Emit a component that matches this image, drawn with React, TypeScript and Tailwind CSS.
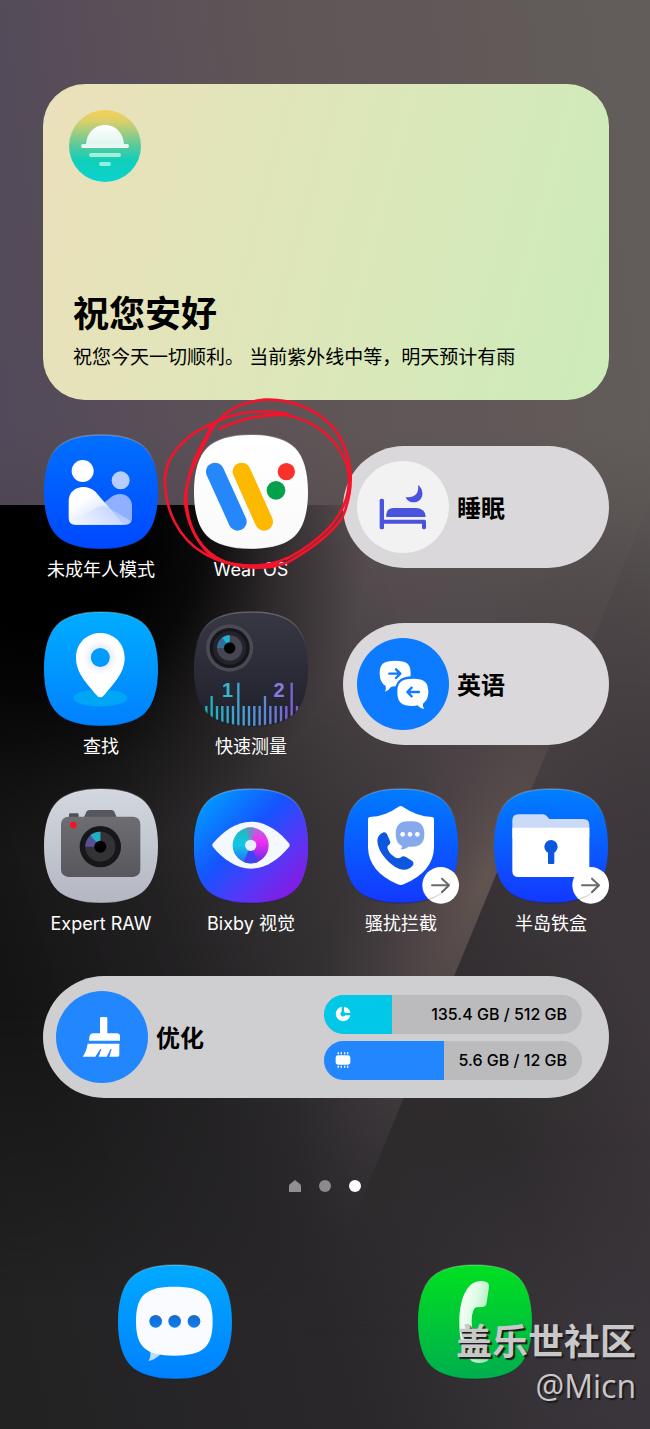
import type { ReactNode } from "react";

const SQUIRCLE =
  "M174 3C236 3 281 17 306 42S345 112 345 174S331 281 306 306S236 345 174 345S67 331 42 306S3 236 3 174S17 67 42 42S112 3 174 3Z";

type IconProps = { id: string; from: string; to: string; children: ReactNode };

// Shared rounded tile that every launcher icon is drawn on
function Tile({ id, from, to, children }: IconProps) {
  return (
    <svg viewBox="0 0 348 348" className="size-29 shrink-0" aria-hidden="true">
      <defs>
        <linearGradient id={`${id}-bg`} x1="0" y1="0" x2="0" y2="1">
          <stop offset="0" stopColor={from} />
          <stop offset="1" stopColor={to} />
        </linearGradient>
        <linearGradient id={`${id}-rim`} x1="0" y1="0" x2="0" y2="1">
          <stop offset="0" stopColor="#fff" stopOpacity="0.25" />
          <stop offset="0.3" stopColor="#fff" stopOpacity="0" />
          <stop offset="0.8" stopColor="#000" stopOpacity="0" />
          <stop offset="1" stopColor="#000" stopOpacity="0.2" />
        </linearGradient>
      </defs>
      <path d={SQUIRCLE} fill={`url(#${id}-bg)`} />
      {children}
      <path d={SQUIRCLE} fill="none" stroke={`url(#${id}-rim)`} strokeWidth="4" />
    </svg>
  );
}

function LinkBadge() {
  return (
    <g>
      <circle cx="293" cy="292" r="55" fill="#fff" />
      <path
        d="M267 292H317M297 272L318 292L297 312"
        fill="none"
        stroke="#6b6b70"
        strokeWidth="6"
        strokeLinecap="round"
        strokeLinejoin="round"
      />
    </g>
  );
}

function KidsIcon() {
  return (
    <Tile id="kids" from="#0070ff" to="#0048ff">
      <defs>
        <linearGradient id="kids-a" x1="0" y1="0" x2="1" y2="1">
          <stop offset="0.3" stopColor="#fff" />
          <stop offset="1" stopColor="#b9ccff" />
        </linearGradient>
        <linearGradient id="kids-b" x1="0" y1="1" x2="1" y2="0">
          <stop offset="0" stopColor="#fff" stopOpacity="0.9" />
          <stop offset="1" stopColor="#a9c3ff" stopOpacity="0.85" />
        </linearGradient>
      </defs>
      <circle cx="119" cy="111" r="33" fill="#fff" />
      <circle cx="233" cy="139" r="27" fill="#b7cdff" />
      <path d="M100 272L206 188C232 170 267 184 267 216V252Q267 272 247 272Z" fill="#8fb0ff" />
      <path d="M77 252V200C77 160 128 145 158 174L242 272H97Q77 272 77 252Z" fill="url(#kids-a)" />
      <path d="M82 266L160 222Q178 212 194 219L264 262Q260 272 247 272H97Q88 272 82 266Z" fill="url(#kids-b)" opacity="0.7" />
    </Tile>
  );
}

function WearIcon() {
  return (
    <Tile id="wear" from="#ffffff" to="#fafafa">
      <path d="M66 113L134 263" stroke="#2687fb" strokeWidth="54" strokeLinecap="round" />
      <path d="M146 113L213 263" stroke="#fcb900" strokeWidth="54" strokeLinecap="round" />
      <circle cx="280" cy="113" r="26" fill="#fb312c" />
      <circle cx="249" cy="169" r="28" fill="#04a14b" />
    </Tile>
  );
}

function FindIcon() {
  return (
    <Tile id="find" from="#00adff" to="#0080ff">
      <defs>
        <radialGradient id="find-pin" gradientUnits="userSpaceOnUse" cx="172" cy="139" r="80">
          <stop offset="0.35" stopColor="#e8edfc" />
          <stop offset="0.65" stopColor="#fff" />
        </radialGradient>
      </defs>
      <ellipse cx="172" cy="261" rx="81" ry="25" fill="#00a6f6" />
      <path
        fillRule="evenodd"
        d="M172 66C130 66 99 98 99 141C99 190 140 225 158 250Q172 268 186 250C204 225 245 190 245 141C245 98 214 66 172 66ZM172 111A28 28 0 1 1 172 168A28 28 0 1 1 172 111Z"
        fill="url(#find-pin)"
      />
    </Tile>
  );
}

const TICKS = Array.from({ length: 18 }, (_, i) => ({
  x: 40 + i * 16,
  y: i === 6 || i === 16 ? 215 : i === 1 || i === 11 ? 255 : 285,
}));

function MeasureIcon() {
  return (
    <Tile id="measure" from="#373843" to="#20202c">
      <defs>
        <clipPath id="measure-clip">
          <path d={SQUIRCLE} />
        </clipPath>
        <linearGradient id="measure-tick" gradientUnits="userSpaceOnUse" x1="30" y1="0" x2="320" y2="0">
          <stop offset="0" stopColor="#18b5b8" />
          <stop offset="0.45" stopColor="#4b9fd0" />
          <stop offset="1" stopColor="#8658d6" />
        </linearGradient>
      </defs>
      <circle cx="110" cy="111" r="71" fill="#4a4a55" />
      <circle cx="110" cy="111" r="60" fill="#15151b" />
      <circle cx="110" cy="111" r="50" fill="#23232b" />
      <circle cx="110" cy="111" r="38" fill="#454651" />
      <path d="M110 111V73A38 38 0 0 0 72 111Z" fill="#2f6f9a" />
      <path d="M110 111V73A38 38 0 0 0 88 80Z" fill="#1fb4cf" />
      <circle cx="110" cy="111" r="17" fill="#000" />
      <g clipPath="url(#measure-clip)" stroke="url(#measure-tick)" strokeWidth="7">
        {TICKS.map((t) => (
          <path key={t.x} d={`M${t.x} ${t.y}V348`} />
        ))}
      </g>
      <g className="font-['Liberation_Sans',sans-serif] font-bold" fontSize="60" textAnchor="middle">
        <text x="104" y="259" fill="#35b8cf">1</text>
        <text x="258" y="259" fill="#8b7be0">2</text>
      </g>
    </Tile>
  );
}

function CameraIcon() {
  return (
    <Tile id="camera" from="#d3d7df" to="#b4b7c1">
      <defs>
        <linearGradient id="camera-body" x1="0" y1="0" x2="0" y2="1">
          <stop offset="0" stopColor="#6d6d72" />
          <stop offset="1" stopColor="#57575d" />
        </linearGradient>
      </defs>
      <rect x="78" y="76" width="29" height="16" rx="4" fill="#4f5056" />
      <path d="M122 90L130 71Q133 66 140 66H205Q212 66 214 71L222 90Z" fill="#56575d" />
      <rect x="54" y="86" width="238" height="181" rx="22" fill="url(#camera-body)" />
      <circle cx="91" cy="111" r="10" fill="#f8121d" />
      <circle cx="172" cy="176" r="62" fill="#17171a" />
      <circle cx="172" cy="176" r="45" fill="#333236" />
      <path d="M172 176V131A45 45 0 0 0 127 176Z" fill="#575096" />
      <path d="M172 176V131A45 45 0 0 0 142 142Z" fill="#1fb1c4" />
      <circle cx="172" cy="176" r="18" fill="#000" />
    </Tile>
  );
}

function BixbyIcon() {
  return (
    <Tile id="bixby" from="#0090ff" to="#4a3cff">
      <defs>
        <linearGradient id="bixby-tile" x1="0.05" y1="0.1" x2="0.9" y2="0.95">
          <stop offset="0" stopColor="#009dff" />
          <stop offset="0.42" stopColor="#1554ff" />
          <stop offset="0.7" stopColor="#5538f8" />
          <stop offset="1" stopColor="#8c16e0" />
        </linearGradient>
        <linearGradient id="bixby-left" x1="0" y1="0" x2="0" y2="1">
          <stop offset="0" stopColor="#1fb7b4" />
          <stop offset="0.5" stopColor="#12c8e8" />
          <stop offset="1" stopColor="#2a66f0" />
        </linearGradient>
        <linearGradient id="bixby-right" x1="0" y1="0" x2="0" y2="1">
          <stop offset="0" stopColor="#b06be0" />
          <stop offset="0.4" stopColor="#f32df0" />
          <stop offset="1" stopColor="#5a2be8" />
        </linearGradient>
      </defs>
      <path d={SQUIRCLE} fill="url(#bixby-tile)" />
      <path
        d="M60 166C90 130 130 101 174 101S258 130 288 166Q292 171 288 177C258 213 218 242 174 242S90 213 60 177Q56 171 60 166Z"
        fill="#f6f8ff"
      />
      <path d="M173 118A54 54 0 0 0 173 226Z" fill="url(#bixby-left)" />
      <path d="M173 118A54 54 0 0 1 173 226Z" fill="url(#bixby-right)" />
      <path d="M173 172L152 222A54 54 0 0 0 196 221Z" fill="#3f43f5" />
      <path d="M173 172L160 120A54 54 0 0 1 186 120Z" fill="#7a86c4" />
      <circle cx="173" cy="172" r="17" fill="#e8f0ff" />
    </Tile>
  );
}

function BlockIcon() {
  return (
    <Tile id="block" from="#007cff" to="#1338ff">
      <path
        d="M173 54Q178 54 184 59Q220 84 268 87Q273 88 273 93V180Q270 252 182 289Q173 293 164 289Q78 252 75 180V93Q75 88 80 87Q128 84 162 59Q168 54 173 54Z"
        fill="#fff"
      />
      <path
        d="M194 100H208Q244 100 244 138T208 176H196Q188 184 172 184Q178 180 177 174Q158 166 158 138Q158 100 194 100Z"
        fill="#86a9ee"
      />
      <circle cx="179" cy="139" r="7" fill="#fff" />
      <circle cx="201" cy="139" r="7" fill="#fff" />
      <circle cx="223" cy="139" r="7" fill="#fff" />
      <path
        d="M103 158Q105 138 122 133Q129 132 133 140L142 162Q143 168 134 174Q131 180 140 194Q155 210 165 211Q172 211 176 206Q181 203 190 208L208 219Q213 223 211 230Q200 246 180 245Q155 242 128 212Q104 185 103 158Z"
        fill="#0e55e0"
      />
      <LinkBadge />
    </Tile>
  );
}

function SafeIcon() {
  return (
    <Tile id="safe" from="#0080ff" to="#1338ff">
      <path d="M58 97Q58 79 76 79H150Q157 79 161 84L169 93H271Q289 93 289 111V150H58Z" fill="#cbdaf7" />
      <path d="M58 119H289V249Q289 267 271 267H76Q58 267 58 249Z" fill="#fff" />
      <circle cx="174" cy="176" r="20" fill="#0b57dd" />
      <rect x="165" y="180" width="19" height="48" rx="3" fill="#0b57dd" />
      <LinkBadge />
    </Tile>
  );
}

function MessagesIcon() {
  return (
    <Tile id="messages" from="#00aaff" to="#0080ff">
      <defs>
        <linearGradient id="messages-dot" x1="0" y1="0" x2="0" y2="1">
          <stop offset="0" stopColor="#1a68c8" />
          <stop offset="1" stopColor="#0a80f5" />
        </linearGradient>
      </defs>
      <path d="M99 255Q103 280 94 291Q112 290 134 268Z" fill="#b8dcff" />
      <path
        d="M172 68C260 68 287 96 287 172C287 248 260 275 172 275C84 275 57 248 57 172C57 96 84 68 172 68Z"
        fill="#fafbff"
      />
      <circle cx="116" cy="172" r="19" fill="url(#messages-dot)" />
      <circle cx="173" cy="172" r="19" fill="url(#messages-dot)" />
      <circle cx="231" cy="172" r="19" fill="url(#messages-dot)" />
    </Tile>
  );
}

function PhoneIcon() {
  return (
    <Tile id="phone" from="#00e020" to="#00ae4e">
      <defs>
        <linearGradient id="phone-set" x1="0" y1="0" x2="1" y2="0.6">
          <stop offset="0" stopColor="#fff" />
          <stop offset="0.5" stopColor="#e0fbe6" />
          <stop offset="1" stopColor="#9fe8b4" />
        </linearGradient>
      </defs>
      <path
        d="M208 54Q217 57 216 70L208 121Q206 128 198 129L178 130Q165 133 164 172Q165 214 178 218L198 219Q206 221 208 228L216 278Q216 290 206 293Q188 300 170 294C140 278 127 232 127 174C127 112 146 62 178 53Q194 49 208 54Z"
        fill="url(#phone-set)"
      />
    </Tile>
  );
}

function Scribble() {
  return (
    <svg
      viewBox="390 0 585 531"
      className="pointer-events-none absolute -left-8 -top-[39px] h-[177px] w-[195px]"
      fill="none"
      stroke="#f3142c"
      strokeWidth="8"
      strokeLinecap="round"
      aria-hidden="true"
    >
      <path d="M772 57C700 44 620 48 552 82C460 120 405 180 402 250C400 340 440 430 520 476C590 515 690 534 770 502C840 462 900 420 935 365C975 270 965 170 905 95C850 40 775 10 700 14C620 22 560 60 530 125C500 190 462 250 462 320C470 400 510 470 580 500C650 520 720 512 765 490" />
      <path d="M565 102C620 76 690 56 765 60C850 76 920 130 948 210C968 290 935 370 860 430C830 455 800 475 765 492" />
      <path d="M545 86C520 140 475 200 466 290C462 360 485 430 540 482C600 516 680 522 740 506" />
    </svg>
  );
}

function SleepGlyph() {
  return (
    <svg viewBox="0 0 276 276" className="size-full" fill="#4a53dd" aria-hidden="true">
      <rect x="68" y="113" width="13" height="92" rx="5" />
      <path d="M88 168V160Q90 141 110 141H176Q206 142 206 168Z" />
      <path d="M74 176H202Q207 176 207 181V200Q207 205 201 205T195 200V188H74Z" />
      <path d="M183 72C205 88 199 124 170 124C158 124 148 117 146 108C168 112 188 100 183 72Z" />
    </svg>
  );
}

function TranslateGlyph() {
  return (
    <svg viewBox="0 0 276 276" className="size-full" aria-hidden="true">
      <path
        d="M114 68C150 68 161 78 161 106S150 145 114 145Q106 145 101 148Q95 158 84 161Q88 152 86 144Q68 134 68 106C68 78 80 68 114 68Z"
        fill="#fff"
      />
      <path
        d="M168 122C204 122 214 134 214 163Q214 186 198 197Q196 205 201 213Q188 210 181 202Q176 204 168 204C132 204 121 192 121 163S132 122 168 122Z"
        fill="#fff"
        stroke="#0c7bff"
        strokeWidth="14"
        paintOrder="stroke"
      />
      <path
        d="M97 107H129M117 94L130 107L117 120M186 162H152M164 149L151 162L164 175"
        fill="none"
        stroke="#0c7bff"
        strokeWidth="7"
        strokeLinecap="round"
        strokeLinejoin="round"
      />
    </svg>
  );
}

function BroomGlyph() {
  return (
    <svg viewBox="0 0 276 276" className="size-full" fill="#fff" aria-hidden="true">
      <path d="M132 82Q132 78 136 78H150Q154 78 154 82V127H182Q192 127 192 137V149H99Q99 127 111 127H132Z" />
      <path d="M95 158H190V192Q190 197 185 197H160L167 174H164L152 197H128L136 174H133L118 197H80Q92 180 95 158Z" />
    </svg>
  );
}

function SunGlyph() {
  return (
    <svg viewBox="0 0 72 72" className="size-18" aria-hidden="true">
      <defs>
        <linearGradient id="sun-bg" x1="0" y1="0" x2="0" y2="1">
          <stop offset="0" stopColor="#f6cf5a" />
          <stop offset="0.15" stopColor="#dcd069" />
          <stop offset="0.5" stopColor="#57c99c" />
          <stop offset="0.7" stopColor="#0fcfb9" />
          <stop offset="1" stopColor="#0ad3d0" />
        </linearGradient>
        <linearGradient id="sun-dome" x1="0" y1="0" x2="0" y2="1">
          <stop offset="0" stopColor="#fff" />
          <stop offset="1" stopColor="#dff4ec" />
        </linearGradient>
      </defs>
      <circle cx="36" cy="36" r="36" fill="url(#sun-bg)" />
      <path d="M17 36C17 8 55 8 55 36Z" fill="url(#sun-dome)" />
      <rect x="12" y="34" width="48" height="4" rx="2" fill="#e6f8f1" />
      <rect x="20" y="43" width="32" height="4" rx="2" fill="#a5eedd" />
      <rect x="30" y="52" width="12" height="4" rx="2" fill="#93efe2" />
    </svg>
  );
}

function Wallpaper() {
  return (
    <svg
      viewBox="0 0 650 1429"
      preserveAspectRatio="none"
      className="absolute inset-0 -z-10 size-full"
      aria-hidden="true"
    >
      <defs>
        <linearGradient id="wp-base" x1="0" y1="0.3" x2="1" y2="0">
          <stop offset="0" stopColor="#52495a" />
          <stop offset="0.45" stopColor="#5f5557" />
          <stop offset="1" stopColor="#625d5a" />
        </linearGradient>
        <linearGradient id="wp-shade" x1="0" y1="0" x2="0" y2="1">
          <stop offset="0" stopColor="#3c363a" stopOpacity="0" />
          <stop offset="0.4" stopColor="#3c363a" stopOpacity="0.85" />
          <stop offset="1" stopColor="#3a353c" />
        </linearGradient>
        <linearGradient id="wp-left" gradientUnits="userSpaceOnUse" x1="0" y1="960" x2="460" y2="820">
          <stop offset="0" stopColor="#151415" />
          <stop offset="0.35" stopColor="#212021" stopOpacity="0.95" />
          <stop offset="0.7" stopColor="#302e2f" stopOpacity="0.6" />
          <stop offset="1" stopColor="#3a3637" stopOpacity="0" />
        </linearGradient>
        <linearGradient id="wp-left-in" x1="0" y1="0" x2="0" y2="1">
          <stop offset="0" stopColor="#fff" stopOpacity="0" />
          <stop offset="0.25" stopColor="#fff" />
        </linearGradient>
        <mask id="wp-left-mask">
          <rect y="505" width="650" height="924" fill="url(#wp-left-in)" />
        </mask>
        <radialGradient id="wp-black" gradientUnits="userSpaceOnUse" cx="40" cy="530" r="330">
          <stop offset="0.3" stopColor="#000" />
          <stop offset="0.5" stopColor="#000" stopOpacity="0.85" />
          <stop offset="0.75" stopColor="#000" stopOpacity="0.35" />
          <stop offset="1" stopColor="#000" stopOpacity="0" />
        </radialGradient>
        <radialGradient id="wp-glow" gradientUnits="userSpaceOnUse" cx="0" cy="0" r="1" gradientTransform="translate(485 880) rotate(22) scale(130 390)">
          <stop offset="0" stopColor="#625550" />
          <stop offset="0.5" stopColor="#52474a" stopOpacity="0.55" />
          <stop offset="1" stopColor="#463f40" stopOpacity="0" />
        </radialGradient>
        <linearGradient id="wp-right" gradientUnits="userSpaceOnUse" x1="450" y1="1040" x2="620" y2="960">
          <stop offset="0" stopColor="#2d2a2c" />
          <stop offset="1" stopColor="#3d373b" />
        </linearGradient>
        <linearGradient id="wp-right-in" x1="0" y1="0" x2="0" y2="1">
          <stop offset="0" stopColor="#fff" stopOpacity="0" />
          <stop offset="0.2" stopColor="#fff" stopOpacity="0.35" />
          <stop offset="0.4" stopColor="#fff" stopOpacity="0.95" />
          <stop offset="0.7" stopColor="#fff" stopOpacity="0.9" />
          <stop offset="0.9" stopColor="#fff" stopOpacity="0" />
        </linearGradient>
        <mask id="wp-right-mask">
          <rect y="502" width="650" height="927" fill="url(#wp-right-in)" />
        </mask>
        <linearGradient id="wp-floor" gradientUnits="userSpaceOnUse" x1="0" y1="1300" x2="540" y2="1180">
          <stop offset="0" stopColor="#232223" />
          <stop offset="0.55" stopColor="#29272a" />
          <stop offset="1" stopColor="#3a353c" stopOpacity="0" />
        </linearGradient>
        <linearGradient id="wp-floor-in" x1="0" y1="0" x2="0" y2="1">
          <stop offset="0" stopColor="#fff" stopOpacity="0" />
          <stop offset="0.7" stopColor="#fff" />
        </linearGradient>
        <mask id="wp-floor-mask">
          <rect y="1000" width="650" height="429" fill="url(#wp-floor-in)" />
        </mask>
      </defs>
      <rect width="650" height="1429" fill="url(#wp-base)" />
      <rect y="430" width="650" height="999" fill="url(#wp-shade)" />
      <rect y="505" width="650" height="924" fill="url(#wp-left)" mask="url(#wp-left-mask)" />
      <rect y="505" width="650" height="924" fill="url(#wp-black)" />
      <rect y="505" width="650" height="924" fill="url(#wp-glow)" />
      <rect y="1000" width="650" height="429" fill="url(#wp-floor)" mask="url(#wp-floor-mask)" />
      <path d="M650 502L267 1429H650Z" fill="url(#wp-right)" mask="url(#wp-right-mask)" />
    </svg>
  );
}

type AppProps = { label: string; icon: ReactNode; children?: ReactNode };

function AppShortcut({ label, icon, children }: AppProps) {
  return (
    <button type="button" className="relative flex flex-col items-center gap-2">
      {icon}
      <span className="whitespace-nowrap text-lg leading-6 text-white">{label}</span>
      {children}
    </button>
  );
}

type PillProps = { label: string; color: string; glyph: ReactNode };

function PillWidget({ label, color, glyph }: PillProps) {
  return (
    <button
      type="button"
      className="col-span-2 mt-3 flex h-[122px] items-center gap-2 rounded-full bg-[#dad8da] pl-[14px]"
    >
      <span className={`size-23 shrink-0 rounded-full ${color}`}>{glyph}</span>
      <span className="pt-1 text-2xl font-bold text-black">{label}</span>
    </button>
  );
}

type MeterProps = {
  name: string;
  used: number;
  total: number;
  color: string;
  icon: ReactNode;
};

function Meter({ name, used, total, color, icon }: MeterProps) {
  return (
    <div
      role="meter"
      aria-label={name}
      aria-valuenow={used}
      aria-valuemin={0}
      aria-valuemax={total}
      className="relative flex h-[39px] items-center justify-end overflow-hidden rounded-full bg-[#bbbbbd] pr-[15px]"
    >
      <div
        className={`absolute inset-y-0 left-0 flex items-center pl-[11px] ${color}`}
        style={{ width: `${(used / total) * 100}%` }}
      >
        {icon}
      </div>
      <span className="font-['Inter',sans-serif] text-base font-medium text-black">
        {used} GB / {total} GB
      </span>
    </div>
  );
}

function StorageIcon() {
  return (
    <svg viewBox="0 0 48 48" className="size-4" aria-hidden="true">
      <path d="M20 2A22 22 0 1 0 46 28H31A8 8 0 1 1 20 17Z" fill="#fff" />
      <path d="M27 2A22 22 0 0 1 46 21H31A8 8 0 0 0 27 17Z" fill="#fff" />
    </svg>
  );
}

function MemoryIcon() {
  return (
    <svg viewBox="0 0 48 48" className="size-4" aria-hidden="true">
      <rect x="2" y="10" width="44" height="28" rx="7" fill="#fff" />
      <path d="M10 1V47M19 1V47M29 1V47M38 1V47" stroke="#fff" strokeWidth="4" strokeDasharray="6 34" />
    </svg>
  );
}

export default function App() {
  return (
    <div className="relative isolate flex min-h-screen flex-col overflow-hidden bg-[#2b292b] pb-[49px] pt-[84px] font-['Inter','Noto_Sans_CJK_SC',sans-serif]">
      <Wallpaper />

      <main className="flex flex-col pl-[43px] pr-[41px]">
        <section className="flex h-[316px] flex-col rounded-[42px] bg-linear-[105deg,#ebe0bb_0%,#dde7b9_50%,#cdebba_100%] px-[30px] pb-7 pt-[26px] text-black">
          <div className="-ml-1">
            <SunGlyph />
          </div>
          <h1 className="mt-auto text-4xl leading-[44px] font-bold">祝您安好</h1>
          <p className="mt-2 text-[19px] leading-7">
            祝您今天一切顺利。 当前紫外线中等，明天预计有雨
          </p>
        </section>

        <div className="mt-[34px] grid grid-cols-4 items-start gap-x-[34px] gap-y-[29px]">
          <AppShortcut label="未成年人模式" icon={<KidsIcon />} />
          <AppShortcut label="Wear OS" icon={<WearIcon />}>
            <Scribble />
          </AppShortcut>
          <PillWidget label="睡眠" color="bg-[#f3f2f3]" glyph={<SleepGlyph />} />

          <AppShortcut label="查找" icon={<FindIcon />} />
          <AppShortcut label="快速测量" icon={<MeasureIcon />} />
          <PillWidget label="英语" color="bg-[#0c7bff]" glyph={<TranslateGlyph />} />

          <AppShortcut label="Expert RAW" icon={<CameraIcon />} />
          <AppShortcut label="Bixby 视觉" icon={<BixbyIcon />} />
          <AppShortcut label="骚扰拦截" icon={<BlockIcon />} />
          <AppShortcut label="半岛铁盒" icon={<SafeIcon />} />
        </div>

        <section className="mt-10 flex h-[122px] items-center gap-2 rounded-full bg-[#cfcfd1] pl-[13px] pr-[27px]">
          <div className="size-23 shrink-0 rounded-full bg-[#2287ff]">
            <BroomGlyph />
          </div>
          <h2 className="pt-1 text-2xl font-bold text-black">优化</h2>
          <div className="ml-auto flex w-[258px] flex-col gap-[7px]">
            <Meter name="存储" used={135.4} total={512} color="bg-[#00c8e6]" icon={<StorageIcon />} />
            <Meter name="内存" used={5.6} total={12} color="bg-[#2287ff]" icon={<MemoryIcon />} />
          </div>
        </section>
      </main>

      <nav className="mt-[82px] flex justify-center gap-[18px]">
        <button type="button" aria-label="主屏幕" className="size-3">
          <svg viewBox="0 0 12 12" className="size-3" aria-hidden="true">
            <path d="M6 0L11 4Q12 5 12 6V12H0V6Q0 5 1 4Z" fill="#918f92" />
          </svg>
        </button>
        <button type="button" aria-label="第 2 页" className="size-3 rounded-full bg-[#8c8a8d]" />
        <button type="button" aria-label="第 3 页" className="size-3 rounded-full bg-white" />
      </nav>

      <footer className="mt-[72px] flex justify-around px-[25px]">
        <button type="button" aria-label="信息">
          <MessagesIcon />
        </button>
        <button type="button" aria-label="电话">
          <PhoneIcon />
        </button>
      </footer>

      <div className="pointer-events-none absolute bottom-[22px] right-[14px] flex flex-col items-end text-[#c9c8c9] [text-shadow:2px_2px_1px_#1d1b1d]">
        <span className="text-4xl leading-[46px] font-bold">盖乐世社区</span>
        <span className="font-['Open_Sans',sans-serif] text-[32px] leading-[42px]">@Micn</span>
      </div>
    </div>
  );
}
